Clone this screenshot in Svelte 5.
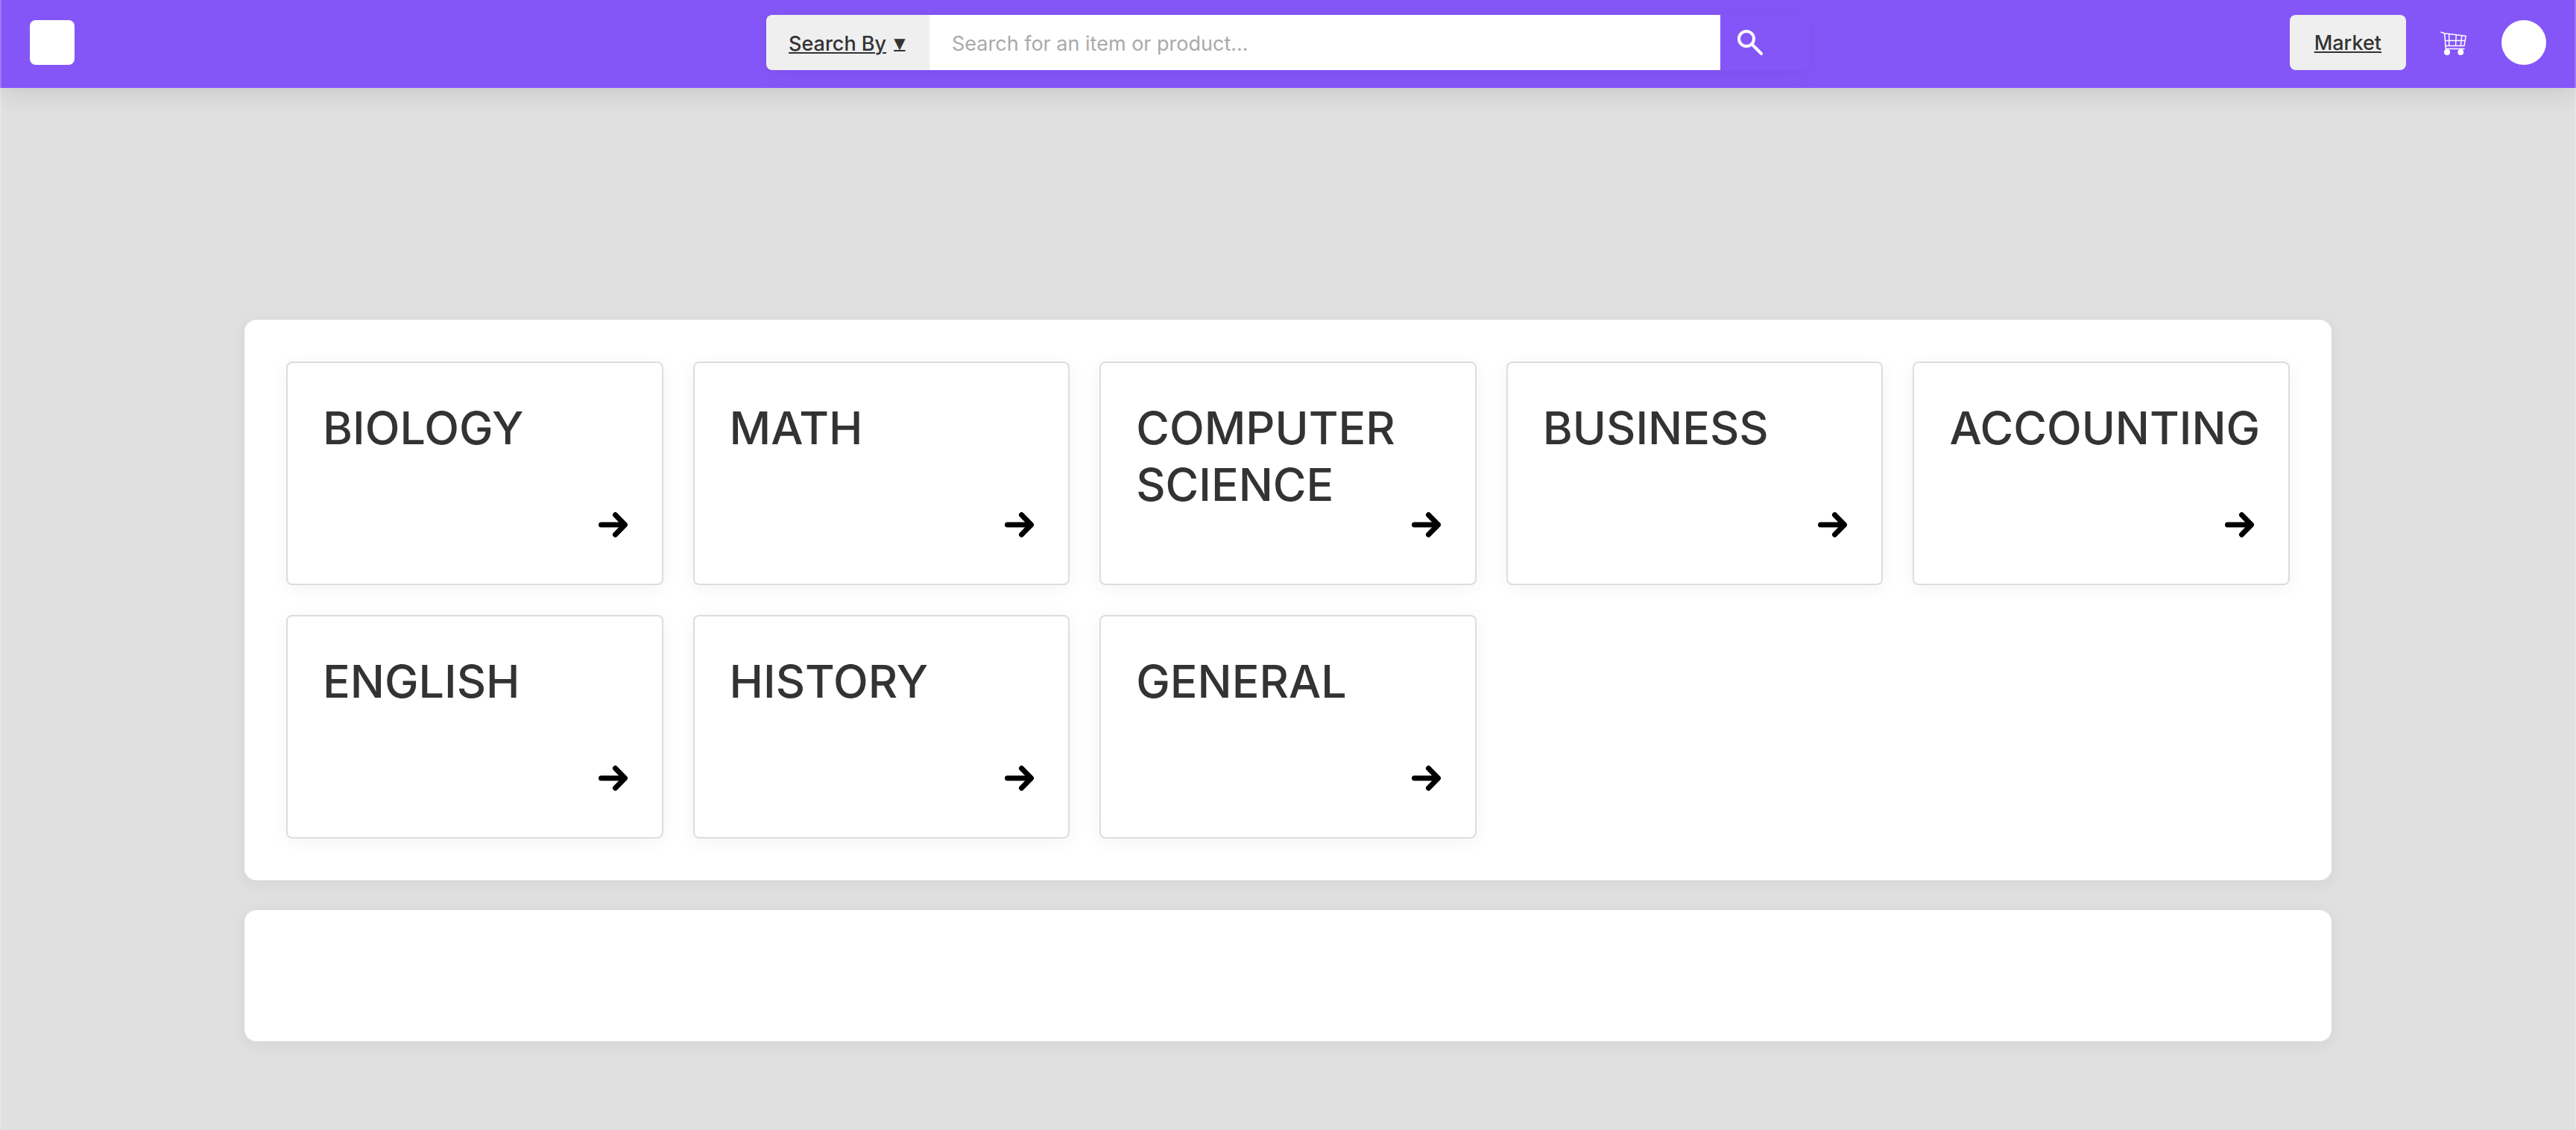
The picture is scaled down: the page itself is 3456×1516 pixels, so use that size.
<script>
  const subjects = [
    'BIOLOGY',
    'MATH',
    'COMPUTER SCIENCE',
    'BUSINESS',
    'ACCOUNTING',
    'ENGLISH',
    'HISTORY',
    'GENERAL'
  ];
  let query = $state('');
</script>

<div class="page">
  <header class="bar">
    <a class="logo" href="#home" aria-label="Home"></a>

    <form class="search" role="search" onsubmit={(e) => e.preventDefault()}>
      <button class="filter" type="button" aria-haspopup="true">
        <span class="label">Search By</span>
        <span class="caret">▼</span>
      </button>
      <input
        type="text"
        bind:value={query}
        aria-label="Search"
        placeholder="Search for an item or product..."
      />
      <button class="go" type="submit" aria-label="Search">
        <svg viewBox="0 0 36 36" width="36" height="36" aria-hidden="true">
          <circle cx="13" cy="13" r="10" />
          <path d="M20.500 20.500 33 33" />
        </svg>
      </button>
    </form>

    <nav class="actions">
      <a class="market" href="#market">Market</a>
      <a class="cart" href="#cart" aria-label="Cart">
        <svg viewBox="0 0 36 34" width="36" height="34" aria-hidden="true">
          <path
            d="M1 3.200 5.700 4.800 34.200 8.300 32 21.600H7M5.700 4.800 7.200 25.400H32M6.500 14.500H33M11.700 5.800V21.600M21.300 7 20.500 21.600M28.800 7.800 27.300 21.600"
          />
          <circle cx="9" cy="30" r="4" />
          <circle cx="27.300" cy="30" r="4" />
        </svg>
      </a>
      <button class="avatar" type="button" aria-label="Account"></button>
    </nav>
  </header>

  <main>
    <section class="panel subjects" aria-label="Subjects">
      {#each subjects as subject}
        <a class="card" href="#{subject.toLowerCase().replace(' ', '-')}">
          <h2>{subject}</h2>
          <svg class="arrow" viewBox="0 0 40 34" width="40" height="34" aria-hidden="true">
            <path d="M4.500 17H36M23.500 3.800 36.500 17 23.500 30.200" />
          </svg>
        </a>
      {/each}
    </section>
    <section class="panel empty" aria-label="Listings"></section>
  </main>
</div>

<style>
  :global(body) {
    margin: 0;
    background: #e0e0e0;
  }

  .page,
  .page * {
    box-sizing: border-box;
  }

  .page {
    position: relative;
    min-height: 100vh;
    font-family: Inter, 'Liberation Sans', sans-serif;
    font-size: 27px;
    color: #333;
  }

  /* Thin light edge along both sides of the window */
  .page::after {
    content: '';
    position: absolute;
    inset: 0;
    border: solid rgba(255, 255, 255, 0.2);
    border-width: 0 2px;
    pointer-events: none;
  }

  .bar {
    display: grid;
    grid-template-columns: 1fr minmax(0, 1400px) 1fr;
    align-items: center;
    padding: 20px 40px 24px;
    background: #8456f7;
    box-shadow: 0 8px 32px rgba(0, 0, 0, 0.1);
  }

  .logo {
    width: 60px;
    height: 60px;
    border-radius: 8px;
    background: #fff;
  }

  .search {
    display: flex;
    height: 74px;
    border-radius: 8px;
    overflow: hidden;
    box-shadow: 0 4px 24px rgba(0, 0, 0, 0.05);
  }

  button,
  input {
    border: 0;
    font: inherit;
    color: inherit;
    padding: 0;
    cursor: pointer;
  }

  .filter {
    display: flex;
    align-items: center;
    gap: 10px;
    width: 219px;
    padding: 2px 0 0 30px;
    background: #efefef;
    font-weight: 500;
  }

  .label,
  .caret,
  .market {
    text-decoration: underline;
    text-decoration-thickness: 2px;
    text-underline-offset: 2px;
  }

  .caret {
    font-family: 'DejaVu Sans', sans-serif;
    font-size: 20px;
    line-height: 28px;
  }

  input {
    flex: 1;
    min-width: 0;
    padding: 2px 30px 0;
    background: #fff;
    outline: 0;
    cursor: text;
  }

  input::placeholder {
    color: #aaa;
    opacity: 1;
  }

  .go {
    width: 120px;
    padding: 0 22px;
    background: #8456f7;
    text-align: left;
  }

  svg {
    display: block;
    fill: none;
    stroke: #fff;
    stroke-linecap: round;
    stroke-linejoin: round;
  }

  .go svg {
    stroke-width: 4;
  }

  .actions {
    display: flex;
    align-items: center;
    justify-content: flex-end;
    gap: 46px;
  }

  .market {
    padding: 2px 33px 0;
    border-radius: 8px;
    background: #efefef;
    color: #333;
    font-weight: 500;
    line-height: 72px;
  }

  .cart svg {
    stroke-width: 1.500;
  }

  .cart circle {
    fill: #fff;
    stroke: none;
  }

  .avatar {
    width: 60px;
    height: 60px;
    border-radius: 50%;
    background: #fff;
  }

  main {
    display: grid;
    gap: 40px;
    max-width: 2800px;
    margin: 0 auto;
    padding: 311px 0 119px;
  }

  .panel {
    border-radius: 16px;
    background: #fff;
    box-shadow: 0 4px 24px rgba(0, 0, 0, 0.06);
  }

  .subjects {
    display: grid;
    grid-template-columns: repeat(5, minmax(0, 1fr));
    gap: 40px;
    padding: 56px;
  }

  .empty {
    min-height: 176px;
  }

  .card {
    position: relative;
    min-height: 300px;
    padding: 49px 46px 62px 47px;
    border: 2px solid #ddd;
    border-radius: 8px;
    background: #fff;
    box-shadow: 0 4px 24px rgba(0, 0, 0, 0.05);
    color: #333;
    text-decoration: none;
  }

  h2 {
    margin: 0;
    font-size: 61px;
    font-weight: 500;
    line-height: 76px;
  }

  /* The arrow sits over the card's corner so long titles can run beside it */
  .arrow {
    position: absolute;
    right: 46px;
    bottom: 62px;
    stroke: #000;
    stroke-width: 7;
  }
</style>
